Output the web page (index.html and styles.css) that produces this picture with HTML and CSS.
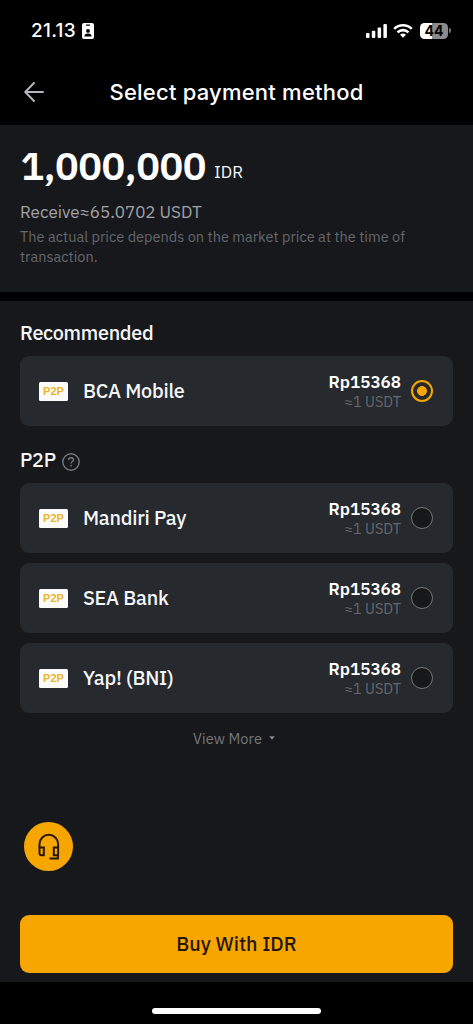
FILE: index.html
```html
<!DOCTYPE html>
<html lang="en">
<head>
<meta charset="utf-8">
<title>Select payment method</title>
<link rel="stylesheet" href="styles.css">
</head>
<body>
<div class="screen">
  <div class="status">
    <span class="time">21.13</span>
    <svg class="idcard" width="12" height="16" viewBox="0 0 12 16">
      <rect width="12" height="16" rx="2" fill="#fff"/>
      <rect x="3.8" y="1.5" width="4.4" height="1.2" rx=".6" fill="#000"/>
      <circle cx="6" cy="7.9" r="1.9" fill="#000"/>
      <path d="M2.4 13.6c0-2.2 1.2-3.2 3.6-3.2s3.6 1 3.6 3.2z" fill="#000"/>
    </svg>
    <span class="grow"></span>
    <svg class="signal" width="21" height="14" viewBox="0 0 21 14" fill="#fff">
      <rect x="0" y="9" width="3.5" height="5" rx="1"/>
      <rect x="5.8" y="6.7" width="3.5" height="7.3" rx="1"/>
      <rect x="11.6" y="3.5" width="3.5" height="10.5" rx="1"/>
      <rect x="17.4" y="0" width="3.5" height="14" rx="1"/>
    </svg>
    <svg class="wifi" width="20" height="14" viewBox="0 0 20 14" fill="none" stroke="#fff" stroke-width="2.6">
      <path d="M1.2 4.9a12.6 12.6 0 0 1 17.6 0"/>
      <path d="M4.5 8.4a7.9 7.9 0 0 1 11 0"/>
      <path d="M10 13.8L7 10.8a4.4 4.4 0 0 1 6 0z" fill="#fff" stroke="none"/>
    </svg>
    <div class="battery"><span>44</span></div>
    <span class="nub"></span>
  </div>

  <header class="header">
    <svg class="back" width="20" height="20" viewBox="0 0 20 20" fill="none" stroke="#b5b6ba" stroke-width="1.9" stroke-linecap="round" stroke-linejoin="round">
      <path d="M19 10H1.2M10 1L1.2 10L10 19"/>
    </svg>
    <h1>Select payment method</h1>
  </header>

  <section class="summary">
    <div class="amount"><span class="value">1,000,000</span><span class="cur">IDR</span></div>
    <div class="receive">Receive≈65.0702 USDT</div>
    <div class="note">The actual price depends on the market price at the time of<br>transaction.</div>
  </section>

  <main class="methods">
    <h2>Recommended</h2>
    <div class="card">
      <span class="tag">P2P</span><span class="name">BCA Mobile</span>
      <span class="price"><b>Rp15368</b><small>≈1 USDT</small></span><span class="radio on"></span>
    </div>
    <h2 class="second"><span>P2P</span>
      <svg width="18" height="18" viewBox="0 0 18 18" fill="none" stroke="#77787c" stroke-width="1.4">
        <circle cx="9" cy="9" r="8.2"/>
        <path d="M6.5 7.1c0-1.5 1-2.4 2.5-2.4s2.5.9 2.5 2.2c0 1.6-2.4 1.7-2.4 3.5"/>
        <circle cx="9.1" cy="12.7" r=".9" fill="#77787c" stroke="none"/>
      </svg>
    </h2>
    <div class="list">
      <div class="card">
        <span class="tag">P2P</span><span class="name">Mandiri Pay</span>
        <span class="price"><b>Rp15368</b><small>≈1 USDT</small></span><span class="radio"></span>
      </div>
      <div class="card">
        <span class="tag">P2P</span><span class="name">SEA Bank</span>
        <span class="price"><b>Rp15368</b><small>≈1 USDT</small></span><span class="radio"></span>
      </div>
      <div class="card">
        <span class="tag">P2P</span><span class="name">Yap! (BNI)</span>
        <span class="price"><b>Rp15368</b><small>≈1 USDT</small></span><span class="radio"></span>
      </div>
    </div>
    <div class="more"><span>View More</span><svg width="6" height="4" viewBox="0 0 6 4"><path d="M.2 .2h5.600L3 3.800z" fill="#85868a"/></svg></div>
    <div class="support">
      <svg width="24" height="28" viewBox="0 0 24 28" fill="none" stroke="#25180a" stroke-width="2">
        <path d="M2.500 14.5V11a9.300 9.300 0 0 1 18.600 0v3.5"/>
        <path d="M2.500 14.5h4.300v7.800H4.600A2.1 2.1 0 0 1 2.500 20.200z"/>
        <path d="M21.100 14.5h-4.300v7.800h4.300z"/>
        <path d="M20.900 22v3.600H12.500"/>
      </svg>
    </div>
    <button class="buy">Buy With IDR</button>
  </main>
  <div class="home"><span></span></div>
</div>
</body>
</html>
```
FILE: styles.css
```css
* { box-sizing: border-box; }
body { margin: 0; background: #000; }
.screen { width: 473px; height: 1024px; background: #000; color: #f5f6f7; font-family: "IBM Plex Sans", Roboto, sans-serif; display: flex; flex-direction: column; overflow: hidden; white-space: nowrap; }
.status { height: 61px; display: flex; align-items: center; padding: 0 22px 0 31px; }
.time { font: 500 19px/24px Inter, sans-serif; letter-spacing: .3px; width: 51px; color: #fff; }
.grow { flex: 1; }
.wifi { margin: 0 7px 0 6px; }
.battery { width: 28px; height: 16px; border-radius: 4.5px; background: linear-gradient(90deg, #fff 44%, #8b8b8b 44%); color: #000; font: 700 14px/16px Inter, sans-serif; text-align: center; }
.nub { width: 2px; height: 5px; margin-left: 1px; border-radius: 0 2px 2px 0; background: #777; }
.header { height: 64px; display: flex; align-items: flex-start; padding: 17px 0 0 24px; }
.back { margin-top: 4px; }
.header h1 { margin: 0 0 0 65.500px; font: 500 22px/28px Inter, sans-serif; letter-spacing: .22px; color: #fff; }
.summary { height: 167px; background: #17181c; padding: 17px 20px 0; }
.amount { display: flex; align-items: flex-start; height: 57px; line-height: 48px; }
.value { font-weight: 600; font-size: 39.500px; letter-spacing: -.45px; width: 194px; padding-left: .5px; color: #fff; }
.cur { font-size: 17px; padding-top: 13px; line-height: 34px; }
.receive { font-size: 17px; line-height: 24px; color: #a1a2a6; margin-top: 1px; }
.note { font-size: 14.500px; line-height: 19.500px; color: #66676b; margin-top: 3px; letter-spacing: .02px; }
.methods { height: 681px; margin-top: 9px; background: #17181c; padding: 18px 20px 0; }
.methods h2 { margin: 0; font-weight: 500; font-size: 19.800px; letter-spacing: -.28px; line-height: 28px; height: 37px; }
.methods .second { display: flex; gap: 6px; margin-top: 20px; }
.second svg { margin-top: 7px; }
.list { display: grid; gap: 10px; }
.card { height: 70px; border-radius: 9px; background: #26292d; display: flex; align-items: center; padding: 0 20px 0 19px; }
.tag { width: 29px; height: 19px; border-radius: 1.5px; background: #fbfbfb; color: #edb42c; font: 700 11px/19px "Liberation Sans", sans-serif; text-align: center; }
.name { margin-left: 15px; font-weight: 500; font-size: 19.800px; letter-spacing: -.25px; line-height: 28px; flex: 1; }
.price { text-align: right; margin: -2px 10px 0 0; }
.price b, .price small { display: block; }
.price b { font-weight: 600; font-size: 17px; line-height: 22px; color: #fff; }
.price small { font-size: 14.500px; line-height: 17px; color: #66686c; }
.radio { width: 22px; height: 22px; border-radius: 50%; border: 1.5px solid #74767a; background: #17181c; }
.radio.on { border: 2.500px solid #f7a600; background: radial-gradient(circle, #f7a600 4.600px, #26292d 5.200px); }
.more { display: flex; justify-content: center; align-items: center; gap: 7px; height: 22px; margin-top: 14px; font-size: 14.500px; letter-spacing: .1px; color: #77787c; padding-right: 5px; }
.support { width: 49px; height: 49px; border-radius: 50%; background: #f7a600; margin: 73px 0 0 4px; display: flex; align-items: center; justify-content: center; }
.buy { display: block; width: 433px; height: 58px; margin-top: 44px; border: 0; border-radius: 9px; background: #f7a600; color: #25180a; font: 500 19.700px/58px "IBM Plex Sans", Roboto, sans-serif; padding: 0; }
.home { height: 42px; display: flex; justify-content: center; padding-top: 26px; }
.home span { width: 169px; height: 6px; border-radius: 3px; background: #fff; }
```
